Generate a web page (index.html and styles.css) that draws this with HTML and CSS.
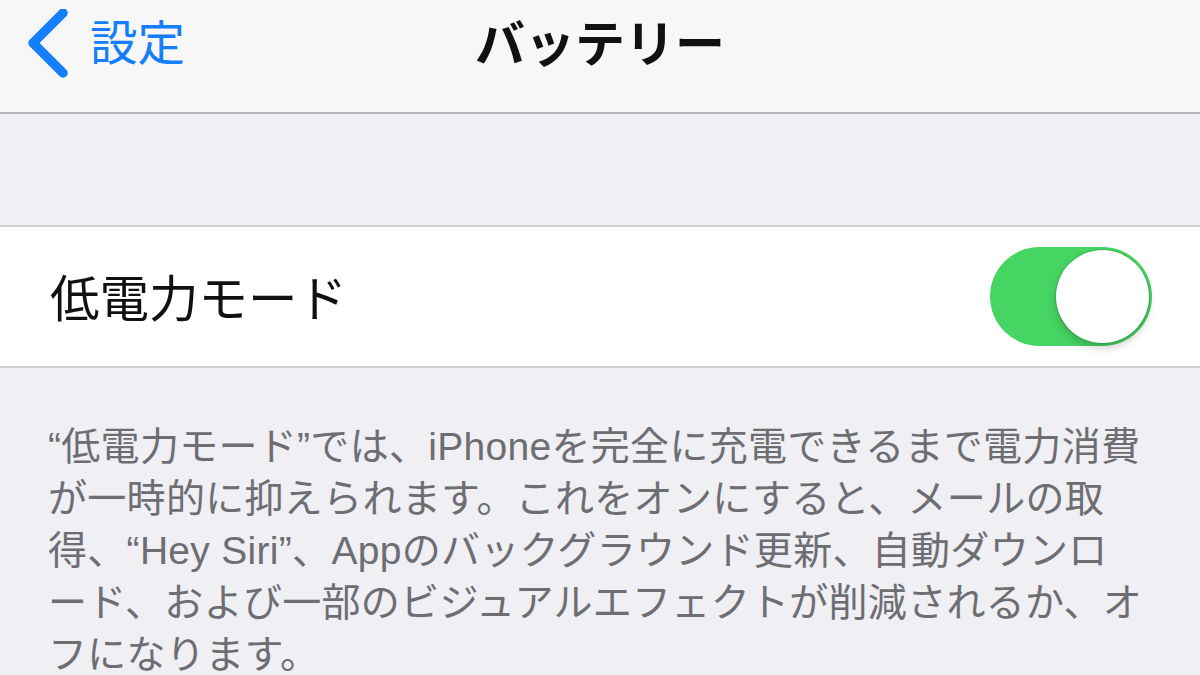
FILE: index.html
```html
<!DOCTYPE html>
<html lang="ja">
<head>
<meta charset="utf-8">
<title>バッテリー</title>
<link rel="stylesheet" href="styles.css">
</head>
<body>
<header class="nav">
  <a class="back">
    <svg class="chevron" width="44" height="70" viewBox="0 0 44 70" aria-hidden="true">
      <path d="M36 4 L6 34 L36 64" fill="none" stroke="#157efb" stroke-width="9.5" stroke-linecap="round" stroke-linejoin="round"/>
    </svg>
    <span class="back-label">設定</span>
  </a>
  <h1 class="title">バッテリー</h1>
</header>
<div class="spacer"></div>
<section class="group">
  <div class="cell">
    <span class="cell-label">低電力モード</span>
    <div class="toggle on"><div class="knob"></div></div>
  </div>
</section>
<p class="footer">“低電力モード”では、iPhoneを完全に充電できるまで電力消費<br>が一時的に抑えられます。これをオンにすると、メールの取<br>得、“Hey Siri”、Appのバックグラウンド更新、自動ダウンロ<br>ード、および一部のビジュアルエフェクトが削減されるか、オ<br>フになります。</p>
</body>
</html>
```

FILE: styles.css
```css
html, body {
  margin: 0;
  padding: 0;
}
body {
  width: 1200px;
  height: 675px;
  overflow: hidden;
  background: #efeff4;
  font-family: "Liberation Sans", "Noto Sans CJK JP", sans-serif;
}
.nav {
  height: 112px;
  background: #f7f7f8;
  border-bottom: 2px solid #b8b8bc;
  display: flex;
  align-items: center;
  justify-content: center;
  position: relative;
}
.back {
  position: absolute;
  left: 27px;
  top: 9px;
  display: flex;
  align-items: center;
  gap: 19px;
  color: #157efb;
}
.chevron {
  display: block;
}
.back-label {
  font-size: 47.5px;
  line-height: 70px;
}
.title {
  margin: 0;
  margin-top: -22px;
  font-size: 50px;
  font-weight: 700;
  color: #111;
  line-height: 60px;
}
.spacer {
  height: 111px;
}
.group {
  background: #fff;
  border-top: 2px solid #cfced3;
  border-bottom: 2px solid #cfced3;
}
.cell {
  height: 139px;
  display: flex;
  align-items: center;
  justify-content: space-between;
  padding: 0 48px 0 50px;
}
.cell-label {
  font-size: 49.5px;
  color: #111;
  margin-top: -2px;
}
.toggle {
  width: 162px;
  height: 99px;
  border-radius: 50px;
  background: #e5e5ea;
  display: flex;
  align-items: center;
  padding: 0 3px;
  box-sizing: border-box;
}
.toggle.on {
  background: #46d463;
  justify-content: flex-end;
}
.knob {
  width: 93px;
  height: 93px;
  border-radius: 50%;
  background: #fff;
  box-shadow: 0 0 0 1px rgba(40, 140, 60, 0.35), 0 5px 8px rgba(0, 0, 0, 0.2);
}
.footer {
  margin: 0;
  padding: 53px 0 0 48px;
  font-size: 39px;
  letter-spacing: 0.3px;
  line-height: 52px;
  color: #6d6d72;
  white-space: nowrap;
}
```
